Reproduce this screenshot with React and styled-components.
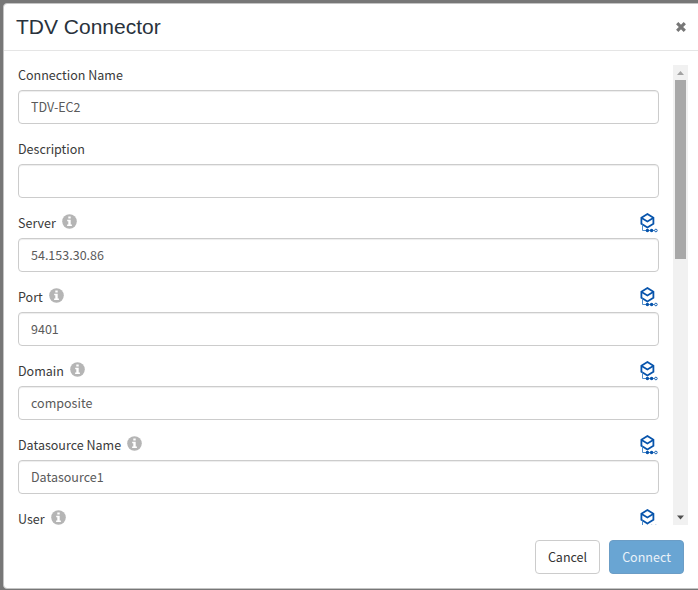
import React from "react";
import styled, { createGlobalStyle } from "styled-components";

const GlobalStyle = createGlobalStyle`
  *, *::before, *::after { box-sizing: border-box; }
  html, body { margin: 0; height: 100%; overflow: hidden; background: #777; }
  body, input, button {
    font-family: "Noto Sans CJK SC", "Noto Sans", sans-serif;
    font-size: 12.53px;
    line-height: 20px;
  }
`;

const Backdrop = styled.div`
  width: 698px;
  height: 590px;
  padding: 3px 0 1px 3px;
  background: #777;
  overflow: hidden;
`;

const Dialog = styled.section`
  display: flex;
  flex-direction: column;
  width: 705px;
  height: 586px;
  background: #fff;
  border: 1px solid #c4c4c4;
  border-radius: 4px;
`;

const Header = styled.header`
  display: flex;
  align-items: center;
  justify-content: space-between;
  height: 47px;
  padding: 0 21px 0 12px;
  border-bottom: 1px solid #e5e5e5;
`;

const Title = styled.h1`
  margin: 0;
  font: 400 21px/28px "Liberation Sans", Arial, sans-serif;
  color: #29323c;
`;

const CloseButton = styled.button`
  display: flex;
  padding: 0 0 1px;
  border: 0;
  background: none;
  color: #777;
`;

const Body = styled.div`
  display: flex;
  justify-content: space-between;
  width: 670px;
  height: 460px;
  margin: 14px 0 0 14px;
`;

const Form = styled.form`
  width: 641px;
  height: 460px;
  overflow: hidden;
`;

const Field = styled.div`
  height: 74px;
`;

const FieldHead = styled.div`
  display: flex;
  align-items: flex-start;
  height: 25px;
`;

const Label = styled.label`
  color: #3a3a3a;
  white-space: nowrap;
`;

const InfoSvg = styled.svg`
  flex: none;
  width: 15px;
  height: 15px;
  margin: 1px 0 0 6px;
`;

const BindSvg = styled.svg`
  flex: none;
  width: 20px;
  height: 22px;
  margin-left: auto;
`;

const Input = styled.input`
  display: block;
  width: 100%;
  height: 34px;
  padding: 5px 12px 7px;
  color: #5a5a5a;
  background: #fff;
  border: 1px solid #ccc;
  border-radius: 4px;
  box-shadow: inset 0 1px 1px rgba(0, 0, 0, 0.075);
  outline: none;
`;

const Scrollbar = styled.div`
  display: flex;
  flex-direction: column;
  align-items: center;
  width: 15px;
  height: 460px;
  background: #f1f1f1;
`;

const ArrowIcon = styled.svg`
  flex: none;
  width: 15px;
  height: 15px;
`;

const Thumb = styled.div`
  width: 11px;
  height: 179px;
  margin-bottom: auto;
  background: #a8a8a8;
`;

const Footer = styled.footer`
  display: flex;
  gap: 9px;
  width: 680px;
  padding-top: 15px;
  justify-content: flex-end;
`;

const Button = styled.button`
  width: ${(p) => (p.$primary ? 75 : 65)}px;
  height: 34px;
  padding: 0;
  border: 1px solid ${(p) => (p.$primary ? "#6b9dc6" : "#ccc")};
  border-radius: 4px;
  background: ${(p) => (p.$primary ? "#69a5d3" : "#fff")};
  color: ${(p) => (p.$primary ? "#e9f2f9" : "#333")};
`;

const fields = [
  { label: "Connection Name", value: "TDV-EC2" },
  { label: "Description", value: "" },
  { label: "Server", value: "54.153.30.86", bindable: true },
  { label: "Port", value: "9401", bindable: true },
  { label: "Domain", value: "composite", bindable: true },
  { label: "Datasource Name", value: "Datasource1", bindable: true },
  { label: "User", value: "", bindable: true },
];

function InfoIcon() {
  return (
    <InfoSvg viewBox="0 0 15 15">
      <circle cx="7.5" cy="7.5" r="7.3" fill="#b5b5b5" />
      <path d="M6.3 2.5H8.7V4.5H6.3ZM5.2 5.7H8.7V10.5H9.9V12H5.1V10.5H6.3V7.2H5.2Z" fill="#fff" />
    </InfoSvg>
  );
}

function CubeIcon() {
  return (
    <BindSvg viewBox="0 0 20 22" fill="none">
      <path d="M8.4 1.1 14.4 4.7V10.8L8.4 14.4 2.4 10.8V4.7Z" stroke="#0754ac" strokeWidth="1.8" />
      <path d="M2.6 4.9 8.4 8.4 14.2 4.9" stroke="#0754ac" strokeWidth="1.7" />
      <path d="M3.5 11.5V17.5H16" stroke="#4f8dcb" />
      <circle cx="8.4" cy="17.5" r="1.7" fill="#0754ac" />
      <circle cx="12.6" cy="17.5" r="1.7" fill="#0754ac" />
      <circle cx="16.9" cy="17.5" r="1.3" fill="#fff" stroke="#1762b5" />
    </BindSvg>
  );
}

export default function App() {
  return (
    <>
      <GlobalStyle />
      <Backdrop>
        <Dialog>
          <Header>
            <Title>TDV Connector</Title>
            <CloseButton aria-label="Close">
              <svg width="10" height="10" viewBox="0 0 10 10">
                <path d="M1.2 1.2 8.8 8.8M8.8 1.2 1.2 8.8" stroke="currentColor" strokeWidth="3.2" />
              </svg>
            </CloseButton>
          </Header>
          <Body>
            <Form>
              {fields.map((f) => (
                <Field key={f.label}>
                  <FieldHead>
                    <Label>{f.label}</Label>
                    {f.bindable && <InfoIcon />}
                    {f.bindable && <CubeIcon />}
                  </FieldHead>
                  <Input defaultValue={f.value} aria-label={f.label} />
                </Field>
              ))}
            </Form>
            <Scrollbar>
              <ArrowIcon viewBox="0 0 15 15"><path d="M4 10 7.5 6 11 10Z" fill="#a3a3a3" /></ArrowIcon>
              <Thumb />
              <ArrowIcon viewBox="0 0 15 15"><path d="M4 5.5H11L7.5 9.5Z" fill="#505050" /></ArrowIcon>
            </Scrollbar>
          </Body>
          <Footer>
            <Button>Cancel</Button>
            <Button $primary>Connect</Button>
          </Footer>
        </Dialog>
      </Backdrop>
    </>
  );
}
